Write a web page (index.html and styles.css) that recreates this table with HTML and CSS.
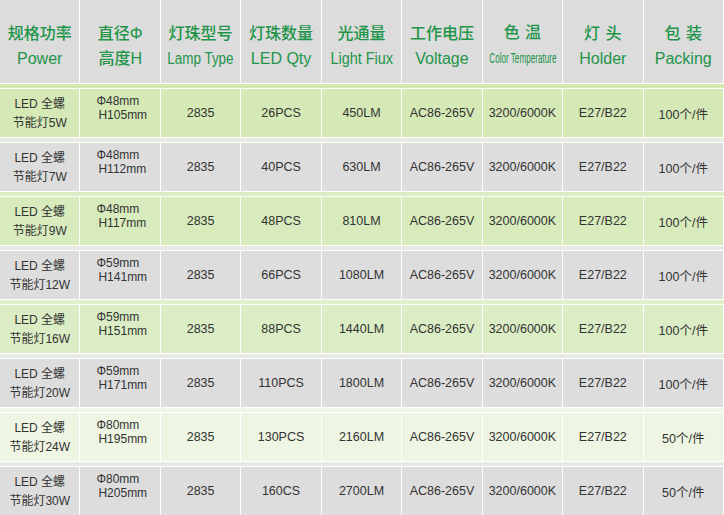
FILE: index.html
```html
<!DOCTYPE html>
<html lang="zh">
<head>
<meta charset="utf-8">
<title>LED 全螺节能灯参数表</title>
<link rel="stylesheet" href="styles.css">
</head>
<body>
<div class="table">
  <div class="head">
    <div class="hc"><span class="zh">规格功率</span><span class="en">Power</span></div>
    <div class="hc"><span class="zh">直径Φ</span><span class="zh">高度H</span></div>
    <div class="hc"><span class="zh">灯珠型号</span><span class="en"><span class="narrow lamp">Lamp Type</span></span></div>
    <div class="hc"><span class="zh">灯珠数量</span><span class="en">LED Qty</span></div>
    <div class="hc"><span class="zh">光通量</span><span class="en"><span class="narrow flux">Light Fiux</span></span></div>
    <div class="hc"><span class="zh">工作电压</span><span class="en">Voltage</span></div>
    <div class="hc"><span class="zh spaced">色 温</span><span class="en"><span class="narrow ct">Color Temperature</span></span></div>
    <div class="hc"><span class="zh spaced">灯 头</span><span class="en">Holder</span></div>
    <div class="hc"><span class="zh spaced">包 装</span><span class="en">Packing</span></div>
  </div>

  <div class="row green1">
    <div class="cells">
      <div class="c name"><span>LED 全螺</span><span>节能灯5W</span></div>
      <div class="c size"><span>Φ48mm</span><span class="h">H105mm</span></div>
      <div class="c">2835</div><div class="c">26PCS</div><div class="c">450LM</div>
      <div class="c">AC86-265V</div><div class="c">3200/6000K</div><div class="c">E27/B22</div><div class="c">100个/件</div>
    </div>
  </div>

  <div class="row gray">
    <div class="cells">
      <div class="c name"><span>LED 全螺</span><span>节能灯7W</span></div>
      <div class="c size"><span>Φ48mm</span><span class="h">H112mm</span></div>
      <div class="c">2835</div><div class="c">40PCS</div><div class="c">630LM</div>
      <div class="c">AC86-265V</div><div class="c">3200/6000K</div><div class="c">E27/B22</div><div class="c">100个/件</div>
    </div>
  </div>

  <div class="row green2">
    <div class="cells">
      <div class="c name"><span>LED 全螺</span><span>节能灯9W</span></div>
      <div class="c size"><span>Φ48mm</span><span class="h">H117mm</span></div>
      <div class="c">2835</div><div class="c">48PCS</div><div class="c">810LM</div>
      <div class="c">AC86-265V</div><div class="c">3200/6000K</div><div class="c">E27/B22</div><div class="c">100个/件</div>
    </div>
  </div>

  <div class="row gray">
    <div class="cells">
      <div class="c name"><span>LED 全螺</span><span>节能灯12W</span></div>
      <div class="c size"><span>Φ59mm</span><span class="h">H141mm</span></div>
      <div class="c">2835</div><div class="c">66PCS</div><div class="c">1080LM</div>
      <div class="c">AC86-265V</div><div class="c">3200/6000K</div><div class="c">E27/B22</div><div class="c">100个/件</div>
    </div>
  </div>

  <div class="row green3">
    <div class="cells">
      <div class="c name"><span>LED 全螺</span><span>节能灯16W</span></div>
      <div class="c size"><span>Φ59mm</span><span class="h">H151mm</span></div>
      <div class="c">2835</div><div class="c">88PCS</div><div class="c">1440LM</div>
      <div class="c">AC86-265V</div><div class="c">3200/6000K</div><div class="c">E27/B22</div><div class="c">100个/件</div>
    </div>
  </div>

  <div class="row gray">
    <div class="cells">
      <div class="c name"><span>LED 全螺</span><span>节能灯20W</span></div>
      <div class="c size"><span>Φ59mm</span><span class="h">H171mm</span></div>
      <div class="c">2835</div><div class="c">110PCS</div><div class="c">1800LM</div>
      <div class="c">AC86-265V</div><div class="c">3200/6000K</div><div class="c">E27/B22</div><div class="c">100个/件</div>
    </div>
  </div>

  <div class="row pale">
    <div class="cells">
      <div class="c name"><span>LED 全螺</span><span>节能灯24W</span></div>
      <div class="c size"><span>Φ80mm</span><span class="h">H195mm</span></div>
      <div class="c">2835</div><div class="c">130PCS</div><div class="c">2160LM</div>
      <div class="c">AC86-265V</div><div class="c">3200/6000K</div><div class="c">E27/B22</div><div class="c">50个/件</div>
    </div>
  </div>

  <div class="row gray">
    <div class="cells">
      <div class="c name"><span>LED 全螺</span><span>节能灯30W</span></div>
      <div class="c size"><span>Φ80mm</span><span class="h">H205mm</span></div>
      <div class="c">2835</div><div class="c">160CS</div><div class="c">2700LM</div>
      <div class="c">AC86-265V</div><div class="c">3200/6000K</div><div class="c">E27/B22</div><div class="c">50个/件</div>
    </div>
  </div>
</div>
</body>
</html>
```

FILE: styles.css
```css
* { box-sizing: border-box; }

html, body {
  margin: 0;
  padding: 0;
  background: #ffffff;
}

.table {
  width: 724px;
  height: 515px;
  overflow: hidden;
  font-family: "Liberation Sans", "Noto Sans CJK SC", sans-serif;
}

.head {
  display: grid;
  grid-template-columns: repeat(9, minmax(0, 1fr));
  column-gap: 1px;
  background: #ffffff;
  height: 83px;
  padding-right: 1px;
}

.hc {
  background: #dcdcdc;
  display: flex;
  flex-direction: column;
  align-items: center;
  justify-content: center;
  padding-top: 8px;
  color: #22954a;
  line-height: 25px;
  white-space: nowrap;
  min-width: 0;
}

.zh {
  font-family: "Liberation Sans", "Noto Sans CJK SC", sans-serif;
  font-size: 16px;
  font-weight: 500;
}

.spaced {
  word-spacing: 1px;
}

.en {
  font-size: 16px;
}

.narrow {
  display: inline-block;
}

.lamp { transform: scaleX(0.84); }
.flux { transform: scaleX(0.9); }
.ct {
  font-size: 14px;
  transform: scaleX(0.58);
}

.row {
  border-top: 1px solid #ffffff;
  padding-top: 4px;
}

.cells {
  border-top: 1px solid #ffffff;
  display: grid;
  grid-template-columns: repeat(9, minmax(0, 1fr));
  column-gap: 1px;
  background: #ffffff;
  height: 49px;
  padding-right: 1px;
}

.c {
  display: flex;
  align-items: center;
  justify-content: center;
  font-size: 12.5px;
  color: #333333;
  white-space: nowrap;
  min-width: 0;
}

.green1 { background: #d2e9b0; }
.green1 .c { background: #d5e9b6; }

.green2 { background: #dcedc2; }
.green2 .c { background: #d8ebbc; }

.green3 { background: #dfefc8; }
.green3 .c { background: #dbedc4; }

.pale { background: #f1f7e8; }
.pale .c { background: #eef5e2; }

.gray { background: #e8ebe4; }
.gray .c { background: #dddddd; }

.name {
  flex-direction: column;
  line-height: 19px;
  font-size: 12px;
  padding-top: 2px;
}

.size {
  flex-direction: column;
  align-items: flex-start;
  padding-left: 16px;
  padding-bottom: 10px;
  line-height: 14px;
  font-size: 12px;
}

.size .h {
  padding-left: 2px;
}
```
